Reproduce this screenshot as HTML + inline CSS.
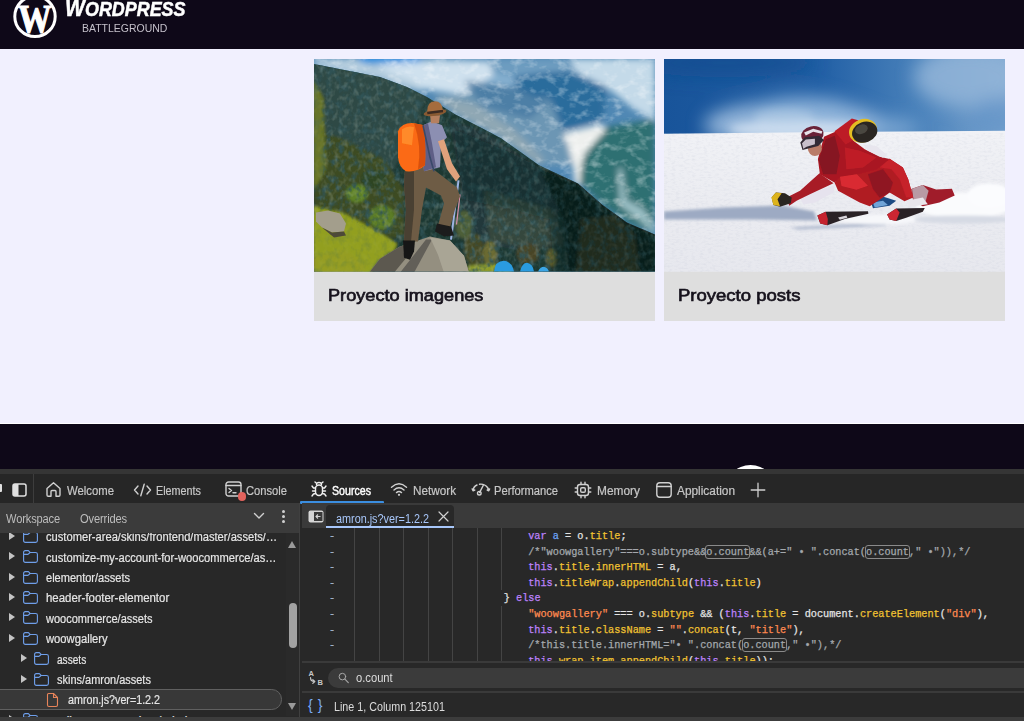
<!DOCTYPE html>
<html lang="es">
<head>
<meta charset="utf-8">
<title>Wordpress Battleground</title>
<style>
*{box-sizing:border-box;margin:0;padding:0}
html,body{width:1024px;height:721px;overflow:hidden;background:#f1f0fe;font-family:"Liberation Sans",sans-serif}
.abs{position:absolute}
.tab,.row .t,#navbar span,.st{transform-origin:0 0}
.st{font:12px "Liberation Sans",sans-serif;color:#dcdcdc;white-space:nowrap}
#page{position:absolute;left:0;top:0;width:1024px;height:470px;background:#f1f0fe;overflow:hidden}
#hdr{position:absolute;left:0;top:0;width:1024px;height:48.7px;background:#0e0818}
#brand{position:absolute;top:-4.6px;font:italic bold 19.5px "Liberation Sans",sans-serif;color:#fff;white-space:nowrap;transform-origin:0 0;-webkit-text-stroke:.5px #fff}
#sub{position:absolute;top:23px;font:10.3px "Liberation Sans",sans-serif;color:#c4c0ca;white-space:nowrap;transform-origin:0 0}
.card{position:absolute;top:59.4px;width:341px;height:261.3px;background:#dedede;overflow:hidden}
.card svg{position:absolute;left:0;top:0}
.cap{position:absolute;top:227.1px;font:16.3px "Liberation Sans",sans-serif;-webkit-text-stroke:.65px #16121c;color:#16121c;white-space:nowrap;transform-origin:0 0}
#ftr{position:absolute;left:0;top:423.2px;width:1024px;height:47px;background:#0e0818;border-top:1px solid #fff;overflow:hidden}
#ftr i{position:absolute;left:724.6px;top:40.8px;width:51.6px;height:51.6px;border-radius:50%;background:#fff}
#dt{position:absolute;left:0;top:469px;width:1024px;height:252px;background:#282828;overflow:hidden;color:#d0d0d0;font:12px "Liberation Sans",sans-serif}

#dt .top{position:absolute;left:0;top:0;width:1024px;height:5.5px;background:#353535}
#dt .tb{position:absolute;left:0;top:5px;width:1024px;height:29px;background:#262626}
.tab{position:absolute;top:9.5px;font:12px "Liberation Sans",sans-serif;color:#c7c7c7;white-space:nowrap;-webkit-text-stroke:.2px #c7c7c7}
.tab.on{color:#fff;-webkit-text-stroke:.4px #fff}
.ico{position:absolute;fill:none;stroke:#d0d0d0;stroke-width:1.4;stroke-linecap:round;stroke-linejoin:round}
#nav{position:absolute;left:0;top:34px;width:299px;height:218px;background:#282828;overflow:hidden}
#navbar{position:absolute;left:0;top:0;width:299px;height:30px;background:#3b3b3b}
#navbar span{position:absolute;top:9px;font:12px "Liberation Sans",sans-serif;color:#bdbdbd;letter-spacing:-.15px}
.row{position:absolute;left:0;height:20px;width:284px;font:12px "Liberation Sans",sans-serif;color:#e6e6e6;white-space:nowrap;-webkit-text-stroke:.2px #e6e6e6}
.row .t{position:absolute;top:3px}
.row .ar{position:absolute;top:4.6px;margin-left:1px;width:0;height:0;border-left:6.5px solid #c4c4c4;border-top:4.5px solid transparent;border-bottom:4.5px solid transparent}
.row svg{position:absolute;top:1.6px}
#split{position:absolute;left:299px;top:34px;width:1.4px;height:218px;background:#404040}
#src{position:absolute;left:302px;top:34px;width:722px;height:217px;background:#282828;overflow:hidden}
#tabs{position:absolute;left:-1.6px;top:0;width:724px;height:25px;background:#3a3a3a}
#tabs>*{margin-left:1.6px}
#ftab{position:absolute;left:24px;top:2px;width:128px;height:23px;background:#282828;border-radius:4px 4px 0 0;border-bottom:2px solid #a8c7fa}
#ftab span{position:absolute;top:6.5px;font:12px "Liberation Sans",sans-serif;color:#a8c7fa;white-space:nowrap;transform-origin:0 0}
#code{position:absolute;left:0;top:25px;width:722px;height:133px;overflow:hidden;font:10.24px "Liberation Mono",monospace;color:#e3e3e3;-webkit-text-stroke:.25px}
.ln.c{color:#a5b4cc}
.ln{position:absolute;left:0;height:15.6px;line-height:15.6px;white-space:pre}
.g{position:absolute;top:0;width:1px;height:140px;background:#444}
.k{color:#bd82fb}.p{color:#f0c232}.s{color:#ff8a50}.c{color:#a4a8ad}.d{color:#6ea6fa}
.bx{outline:1px solid #8a8a8a;border-radius:2px}
#find{position:absolute;left:0;top:158px;width:722px;height:31px;background:#282828;border-top:2px solid #3a3a3a}
#pill{position:absolute;left:26px;top:4.5px;width:720px;height:20px;border-radius:10px;background:#3b3b3b}
#stat{position:absolute;left:0;top:188.3px;width:722px;height:29px;background:#282828;border-top:2px solid #3a3a3a}
#bot{position:absolute;left:0;top:247.5px;width:1024px;height:5px;background:#3c3c3c}

.dot{position:absolute;left:282px;width:3px;height:3px;border-radius:50%;background:#d0d0d0}
.selbg{position:absolute;left:-12px;top:-1px;width:294px;height:20.4px;border:1px solid #606060;border-radius:10.2px;background:#383838}
#sbar{position:absolute;left:285.5px;top:30px;width:13.5px;height:183px;background:#2a2a2a}
#sbar .up{position:absolute;left:2.5px;top:7.5px;width:0;height:0;border-bottom:7px solid #9a9a9a;border-left:4.5px solid transparent;border-right:4.5px solid transparent}
#sbar .dn{position:absolute;left:2.5px;top:170px;width:0;height:0;border-top:7px solid #9a9a9a;border-left:4.5px solid transparent;border-right:4.5px solid transparent}
#sbar .thumb{position:absolute;left:3px;top:69.5px;width:8.2px;height:45px;border-radius:4px;background:#a2a2a2}
</style>
</head>
<body>
<div id="page">
  <div id="hdr">
    <svg class="abs" style="left:13px;top:0" width="44" height="40" viewBox="13 0 44 40">
      <circle cx="35" cy="16.4" r="20.2" fill="none" stroke="#fff" stroke-width="3"/>
      <text x="0" y="0" text-anchor="middle" font-family="Liberation Serif,serif" font-weight="bold" font-size="40" fill="#fff" stroke="#fff" stroke-width="1.1" transform="translate(34.8 32.2) scale(.84 1)">W</text>
    </svg>
    <div id="brand" style="left:64.5px;transform:scaleX(0.9186)"><span style="font-size:23px">W</span>ORDPRESS</div>
    <div id="sub" style="left:81.6px;transform:scaleX(1.0176)">BATTLEGROUND</div>
  </div>
  <div class="card" style="left:314px" id="c1">
    <svg width="341" height="212.7" viewBox="0 0 341 212" preserveAspectRatio="none">
<defs>
<filter id="b1" x="-5%" y="-5%" width="110%" height="110%"><feGaussianBlur stdDeviation="1.6"/></filter>
<filter id="b2" x="-5%" y="-5%" width="110%" height="110%"><feGaussianBlur stdDeviation="0.5"/></filter>
<filter id="b3" x="-5%" y="-5%" width="110%" height="110%"><feGaussianBlur stdDeviation="3"/></filter>
<filter id="b4" x="-10%" y="-10%" width="120%" height="120%"><feGaussianBlur stdDeviation="4"/></filter>
<filter id="tx1" x="0" y="0" width="100%" height="100%"><feTurbulence type="fractalNoise" baseFrequency="0.09 0.13" numOctaves="3" seed="7" result="n"/><feColorMatrix in="n" type="matrix" values="0 0 0 0 1  0 0 0 0 1  0 0 0 0 1  2.6 0 0 0 -1.25"/></filter>
<filter id="tx2" x="0" y="0" width="100%" height="100%"><feTurbulence type="fractalNoise" baseFrequency="0.16 0.12" numOctaves="3" seed="3" result="n"/><feColorMatrix in="n" type="matrix" values="0 0 0 0 0.03  0 0 0 0 0.09  0 0 0 0 0.1  0 3.0 0 0 -1.35"/></filter>
<filter id="tx3" x="0" y="0" width="100%" height="100%"><feTurbulence type="fractalNoise" baseFrequency="0.2 0.16" numOctaves="2" seed="11" result="n"/><feColorMatrix in="n" type="matrix" values="0 0 0 0 0.62  0 0 0 0 0.7  0 0 0 0 0.62  0 0 2.6 0 -1.2"/></filter>
<clipPath id="mtn"><polygon points="0,0 341,0 341,175 313,163 288,145 264,124 225,106 204,91 187,79 170,70 141,55 113,38 93,28 66,18 0,5"/></clipPath>
<clipPath id="fst"><polygon points="0,5 66,18 93,28 113,38 141,55 170,70 187,79 204,91 225,106 264,124 288,145 313,163 341,175 341,212 0,212"/></clipPath>
</defs>
<rect width="341" height="212" fill="#5088b4"/>
<g clip-path="url(#mtn)"><g filter="url(#b3)">
<rect x="0" y="0" width="341" height="30" fill="#86b0d0"/>
<rect x="45" y="-4" width="62" height="8" fill="#1d8fe0"/>
<polygon points="60.0,6.0 120.0,2.0 175.0,4.0 180.0,16.0 150.0,36.0 110.0,30.0" fill="#cfe1ee"/>
<polygon points="200.0,16.0 250.0,10.0 292.0,28.0 290.0,60.0 262.0,68.0 232.0,76.0 206.0,52.0" fill="#2c6c9c"/>
<polygon points="120.0,40.0 170.0,30.0 236.0,40.0 250.0,74.0 254.0,87.0 259.0,106.0 225.0,106.0 204.0,91.0 187.0,79.0 170.0,70.0 141.0,55.0" fill="#6c96b4"/>
<polygon points="291.0,68.0 341.0,60.0 341.0,175.0 313.0,163.0 288.0,145.0 266.0,124.0 266.0,106.0 271.0,94.0" fill="#2f7072"/>
<polygon points="255.0,0.0 341.0,0.0 341.0,62.0 320.0,50.0 292.0,28.0 262.0,12.0" fill="#c4dae9"/>
<polygon points="175.0,0.0 255.0,0.0 262.0,12.0 230.0,14.0 200.0,18.0 180.0,14.0" fill="#6d9cc0"/>
<polygon points="0.0,0.0 40.0,0.0 60.0,8.0 100.0,22.0 110.0,34.0 66.0,18.0 0.0,5.0" fill="#b7cfdf"/>
<polygon points="150.0,22.0 200.0,28.0 235.0,44.0 215.0,60.0 170.0,48.0" fill="#4d7fa6"/>
<polygon points="120.0,36.0 160.0,44.0 200.0,70.0 230.0,100.0 225.0,106.0 187.0,79.0 141.0,55.0" fill="#8fa7b4"/>
<polygon points="249.0,74.0 288.0,65.0 292.0,70.0 271.0,94.0 267.0,108.0 266.0,126.0 261.0,124.0 259.0,106.0 254.0,87.0" fill="#eef0ee"/>
<polygon points="304.0,110.0 308.0,108.0 312.0,140.0 330.0,150.0 341.0,168.0 341.0,175.0 325.0,160.0 306.0,146.0" fill="#b9d6dc" opacity=".8"/>
</g></g>
<rect width="341" height="212" filter="url(#tx1)" clip-path="url(#mtn)" opacity=".38"/>
<g clip-path="url(#fst)">
<g filter="url(#b1)">
<rect x="-5" y="0" width="351" height="217" fill="#1e3732"/>
<polygon points="0.0,5.0 66.0,18.0 93.0,28.0 113.0,38.0 100.0,70.0 80.0,110.0 40.0,120.0 0.0,110.0" fill="#2f4a44"/>
<polygon points="0.0,70.0 30.0,80.0 70.0,100.0 90.0,130.0 90.0,180.0 60.0,175.0 25.0,152.0 0.0,165.0" fill="#3c4c22"/>
<polygon points="0.0,20.0 10.0,40.0 12.0,110.0 0.0,130.0" fill="#5d6a24"/>
<ellipse cx="43" cy="134" rx="11" ry="9" fill="#5f8228"/>
<ellipse cx="68" cy="158" rx="13" ry="12" fill="#5b7d26"/>
<ellipse cx="60" cy="120" rx="14" ry="9" fill="#2f4420"/>
<polygon points="135.0,60.0 170.0,72.0 225.0,108.0 250.0,125.0 240.0,170.0 200.0,190.0 150.0,180.0 146.0,120.0" fill="#22393a"/>
<polygon points="170.0,130.0 240.0,150.0 250.0,185.0 215.0,190.0 175.0,180.0" fill="#36463e"/>
<polygon points="225.0,108.0 264.0,124.0 288.0,145.0 313.0,163.0 341.0,175.0 341.0,212.0 255.0,212.0 250.0,160.0 235.0,130.0" fill="#10221f"/>
<polygon points="267.0,160.0 300.0,156.0 321.0,175.0 325.0,212.0 262.0,212.0" fill="#3a3a22"/>
<ellipse cx="150" cy="165" rx="9" ry="14" fill="#4e5f38"/>
<ellipse cx="160" cy="190" rx="10" ry="16" fill="#454a28"/>
<ellipse cx="176" cy="194" rx="7" ry="13" fill="#6a6a30"/>
<ellipse cx="214" cy="194" rx="11" ry="10" fill="#4a4526"/>
<ellipse cx="238" cy="198" rx="5" ry="9" fill="#6a6a32"/>
<polygon points="0.0,147.0 30.0,154.0 60.0,170.0 83.0,184.0 80.0,191.0 66.0,199.0 55.0,214.0 0.0,214.0" fill="#8e9c1e"/>
<polygon points="0.0,196.0 30.0,190.0 52.0,205.0 50.0,214.0 0.0,214.0" fill="#9a8f2c"/>
<polygon points="154.0,206.0 180.0,204.0 200.0,212.0 154.0,214.0" fill="#8e9c2a"/>
</g>
<rect width="341" height="212" filter="url(#tx2)" opacity=".85"/>
<rect width="341" height="212" filter="url(#tx3)" opacity=".22"/>
<g filter="url(#b3)">
<polygon points="232.0,112.0 264.0,126.0 288.0,147.0 313.0,165.0 341.0,177.0 341.0,214.0 240.0,214.0 236.0,160.0" fill="#0b1a18" opacity=".45"/>
<polygon points="140.0,70.0 200.0,95.0 232.0,112.0 236.0,160.0 200.0,150.0 150.0,140.0" fill="#0f2422" opacity=".3"/>
</g>
<g filter="url(#b1)">
<polygon points="0.0,149.0 30.0,156.0 60.0,172.0 82.0,185.0 78.0,191.0 66.0,199.0 55.0,214.0 0.0,214.0" fill="#93a01e" opacity=".8"/>
<polygon points="0.0,22.0 8.0,40.0 10.0,110.0 0.0,130.0" fill="#6d7a26" opacity=".7"/>
</g>
<g filter="url(#b2)">
<polygon points="2.0,153.0 14.0,151.0 26.0,154.0 32.0,164.0 30.0,172.0 18.0,173.0 8.0,168.0 2.0,162.0" fill="#a39e8c"/>
<polygon points="8.0,168.0 18.0,173.0 30.0,172.0 32.0,176.0 20.0,178.0" fill="#4d4a38"/>
<path d="M180 212 Q181 201 190 201 Q198 202 200 212 Z" fill="#2a9be0"/>
<path d="M206 212 Q208 203 213 203 Q219 204 220 212 Z" fill="#2a9be0"/>
<path d="M224 212 Q226 207 230 207 Q234 208 235 212 Z" fill="#3aa5e6"/>
<polygon points="55.0,213.0 66.0,199.0 86.0,187.0 116.0,177.0 136.0,181.0 150.0,196.0 155.0,213.0" fill="#948f80"/>
<polygon points="55.0,213.0 66.0,199.0 86.0,187.0 100.0,183.0 94.0,196.0 80.0,213.0" fill="#5c594f"/>
<polygon points="86.0,213.0 112.0,180.0 118.0,180.0 100.0,213.0" fill="#625f58"/>
<polygon points="116.0,178.0 136.0,181.0 150.0,196.0 155.0,213.0 130.0,213.0 124.0,195.0" fill="#a9a595"/>
</g>
</g>
<g filter="url(#b2)">
<path d="M144.5 121 L137 180" stroke="#9db4e4" stroke-width="2" fill="none"/>
<path d="M146 135 L142.5 165" stroke="#d890a8" stroke-width="1.2" fill="none"/>
<polygon points="91.0,109.0 113.0,106.0 122.0,112.0 143.0,128.0 146.0,137.0 141.0,150.0 136.0,168.0 124.0,166.0 130.0,144.0 127.0,136.0 112.0,128.0 108.0,150.0 104.0,182.0 90.0,182.0 92.0,150.0 90.0,125.0" fill="#6e5c45"/>
<polygon points="91.0,112.0 100.0,112.0 100.0,150.0 97.0,182.0 90.0,182.0 92.0,150.0 90.0,125.0" fill="#4a3f31"/>
<polygon points="89.0,181.0 101.0,181.0 100.0,192.0 96.0,200.0 90.0,198.0" fill="#191816"/>
<polygon points="123.0,164.0 137.0,167.0 140.0,176.0 130.0,177.0 121.0,172.0" fill="#1d1c1a"/>
<polygon points="109.0,66.0 118.0,62.0 128.0,66.0 133.0,78.0 127.0,84.0 126.0,108.0 110.0,112.0 108.0,90.0" fill="#8c8fb2"/>
<polygon points="109.0,66.0 114.0,64.0 118.0,84.0 122.0,108.0 110.0,112.0 108.0,90.0" fill="#5e5f86"/>
<polygon points="124.0,82.0 130.0,80.0 138.0,104.0 146.0,117.0 142.0,122.0 133.0,110.0" fill="#e0a27c"/>
<polygon points="116.0,56.0 126.0,56.0 125.0,64.0 117.0,64.0" fill="#b5805e"/>
<ellipse cx="121" cy="53.5" rx="11.5" ry="3.2" fill="#8a5a32" transform="rotate(-8 121 53.5)"/>
<path d="M113 53 Q113 42 121 42 Q128 42 129 51 Z" fill="#a56c3e"/>
<path d="M113 52.5 L129 50.5 L129 53 L113.500 55 Z" fill="#3a2a20"/>
<path d="M84 72 Q88 63 100 64 L110 66 Q112 90 111 106 Q104 113 92 112 Q85 108 84 98 Z" fill="#fb6a12"/>
<path d="M100 64 L110 66 Q112 90 111 106 L104 110 Q108 86 100 64 Z" fill="#d9500c"/>
<path d="M88 70 Q94 66 100 68 L98 86 L88 84 Z" fill="#ff8a2a"/>
<path d="M109 66 L116 98 L120 112" stroke="#3a4a6a" stroke-width="1.6" fill="none"/>
</g>
</svg>
    <div class="cap" style="left:14.1px;transform:scaleX(1.1150)">Proyecto imagenes</div>
  </div>
  <div class="card" style="left:664px" id="c2">
    <svg width="341" height="212.7" viewBox="0 0 341 212" preserveAspectRatio="none">
<defs>
<linearGradient id="sky" x1="0" y1="0" x2="1" y2="0"><stop offset="0" stop-color="#18549a"/><stop offset=".45" stop-color="#215fa5"/><stop offset=".75" stop-color="#4a82bb"/><stop offset="1" stop-color="#7aa4cf"/></linearGradient>
<linearGradient id="snow" x1="0" y1="0" x2="0" y2="1"><stop offset="0" stop-color="#f1f2f6"/><stop offset=".5" stop-color="#ebecf1"/><stop offset="1" stop-color="#e7e8ee"/></linearGradient>
<filter id="sf1" x="-20%" y="-20%" width="140%" height="140%"><feGaussianBlur stdDeviation="9"/></filter>
<filter id="sf2" x="-20%" y="-20%" width="140%" height="140%"><feGaussianBlur stdDeviation="4"/></filter>
<filter id="sf3" x="-10%" y="-10%" width="120%" height="120%"><feGaussianBlur stdDeviation="1.5"/></filter>
<filter id="sf4" x="-5%" y="-5%" width="110%" height="110%"><feGaussianBlur stdDeviation="0.7"/></filter>
<filter id="sn" x="0" y="0" width="100%" height="100%"><feTurbulence type="fractalNoise" baseFrequency="0.25 0.5" numOctaves="2" seed="5"/><feColorMatrix type="matrix" values="0 0 0 0 0.55  0 0 0 0 0.58  0 0 0 0 0.68  0 0 1.6 0 -0.72"/></filter>
</defs>
<rect width="341" height="80" fill="url(#sky)"/>
<g filter="url(#sf1)">
<ellipse cx="305" cy="18" rx="55" ry="30" fill="#93b5d8" opacity=".85"/>
<ellipse cx="335" cy="58" rx="30" ry="20" fill="#5f93c6" opacity=".6"/>
<ellipse cx="130" cy="66" rx="90" ry="24" fill="#a9c6e4" opacity=".85"/>
<ellipse cx="140" cy="52" rx="50" ry="16" fill="#8fb4da" opacity=".6"/>
<ellipse cx="215" cy="70" rx="40" ry="12" fill="#8fb5db" opacity=".7"/>
<ellipse cx="60" cy="4" rx="90" ry="14" fill="#154c8f" opacity=".7"/>
</g>
<g filter="url(#sf2)"><ellipse cx="135" cy="70" rx="70" ry="9" fill="#d6e4f2" opacity=".8"/><ellipse cx="120" cy="58" rx="30" ry="8" fill="#bdd3ea" opacity=".5"/></g>
<path d="M0 74.5 Q170 72.5 341 71.5 L341 212 L0 212 Z" fill="url(#snow)"/>
<rect y="74" width="341" height="138" filter="url(#sn)" opacity=".35"/>
<g filter="url(#sf3)">
<polygon points="0.0,152.0 60.0,148.0 118.0,146.0 150.0,152.0 153.0,161.0 90.0,160.0 0.0,160.0" fill="#9daac3"/>
<polygon points="125.0,168.0 222.0,163.0 222.0,166.0 135.0,170.0" fill="#aab5cb"/>
<ellipse cx="300" cy="146" rx="48" ry="13" fill="#fafbfd"/>
<ellipse cx="325" cy="136" rx="22" ry="12" fill="#fbfcfe"/>
<ellipse cx="215" cy="160" rx="40" ry="5" fill="#f6f7fa"/>
<ellipse cx="300" cy="160" rx="50" ry="4" fill="#d6dae4"/>
</g>
<g filter="url(#sf4)">
<polygon points="153.4,155.9 161.7,152.3 204.0,151.8 204.4,154.3 180.8,159.6 163.4,165.6 156.2,163.9" fill="#2b2228"/>
<polygon points="153.4,155.9 161.7,152.3 163.8,159.6 163.4,165.6 156.2,163.9" fill="#c4222e"/>
<polygon points="223.1,155.0 232.2,149.0 260.8,148.6 258.8,152.3 242.2,158.3 232.2,161.6 225.6,159.9" fill="#2b2228"/>
<polygon points="223.1,155.0 232.2,149.0 235.6,153.0 232.2,161.6 225.6,159.9" fill="#cc2632"/>
<polygon points="174.1,157.9 182.4,155.9 183.3,158.3 175.8,160.3" fill="#d8d4da"/>
<polygon points="247.2,129.7 258.8,125.7 272.1,130.1 287.9,129.4 290.7,136.0 275.4,143.0 258.8,146.7 249.2,141.7" fill="#a01f2c"/>
<polygon points="248.0,129.4 258.8,125.7 264.6,131.4 261.3,143.0 249.7,141.7" fill="#b89aa4"/>
<polygon points="242.2,141.3 258.8,138.0 263.8,144.7 245.5,147.2" fill="#e9e6ec"/>
<polygon points="205.7,139.7 215.6,136.0 232.2,141.3 225.6,146.3 209.0,148.8" fill="#1f4b84"/>
<polygon points="209.0,143.0 219.0,141.3 223.9,145.5 210.7,148.0" fill="#6fa4d8"/>
<polygon points="225.6,99.5 238.9,108.1 244.2,119.8 249.2,138.0 240.5,141.7 225.6,133.0 219.0,138.0 205.7,146.7 195.7,143.0 174.1,131.4 170.5,123.1 175.8,114.8 202.4,109.8" fill="#b01a24"/>
<polygon points="175.8,116.8 192.4,114.4 204.0,126.4 192.4,130.4 177.5,126.7" fill="#d92c32"/>
<polygon points="225.6,99.5 238.9,108.1 244.2,119.8 249.2,138.0 242.2,138.0 235.6,119.8 227.3,109.8 215.6,108.1" fill="#c6202a"/>
<polygon points="204.0,114.8 219.0,109.8 228.9,123.1 225.6,133.0 215.6,138.0 209.0,129.7" fill="#8f1620"/>
<polygon points="160.0,77.4 174.1,71.3 189.1,81.2 200.7,89.9 215.6,97.5 225.6,99.8 212.3,109.8 192.4,114.8 175.8,117.3 170.5,123.1 155.9,114.8 153.9,99.8" fill="#a91822"/>
<polygon points="161.7,79.9 170.8,76.6 175.8,96.5 172.5,114.8 159.2,114.8 154.6,100.7" fill="#861420"/>
<polygon points="180.8,88.2 195.7,91.5 212.3,98.2 199.0,108.1 182.4,109.8" fill="#bf1f28"/>
<polygon points="170.5,72.0 187.8,59.3 194.1,61.0 191.1,79.9 181.6,85.2" fill="#bd1c26"/>
<ellipse cx="199.0" cy="71.6" rx="14.3" ry="11.6" fill="#e3bd22" transform="rotate(-20 199.0 71.6)"/>
<ellipse cx="200.7" cy="72.9" rx="12.9" ry="10.3" fill="#2a2622" transform="rotate(-20 200.7 72.9)"/>
<ellipse cx="197.4" cy="70.0" rx="6.6" ry="4.6" fill="#4a4640" transform="rotate(-20 197.4 70.0)"/>
<polygon points="199.0,84.9 212.3,86.6 223.1,95.7 219.0,98.5 204.0,91.5" fill="#e8e6ee"/>
<polygon points="136.0,138.0 170.8,125.6 169.5,133.0 150.9,143.0 139.3,145.0" fill="#e6e3ee"/>
<polygon points="155.5,114.0 169.5,123.9 145.9,134.7 132.6,141.3 125.2,146.3 122.7,138.0 136.0,131.4" fill="#a81a26"/>
<polygon points="107.7,138.0 111.9,133.0 121.0,133.9 127.7,138.0 126.8,143.8 116.0,147.2 109.4,145.5" fill="#2c2520"/>
<polygon points="107.4,138.0 111.9,133.0 117.7,133.9 113.5,139.7 116.0,146.7 109.4,145.5" fill="#dcb31c"/>
<ellipse cx="150.9" cy="89.1" rx="7.0" ry="7.6" fill="#b97c68" transform="rotate(0 150.9 89.1)"/>
<ellipse cx="148.4" cy="75.3" rx="11.3" ry="8.3" fill="#6a2438" transform="rotate(-12 148.4 75.3)"/>
<polygon points="140.1,73.3 149.2,69.6 158.4,72.0 157.5,74.6 149.2,72.6 141.8,76.3" fill="#e6e2ea"/>
<polygon points="136.3,83.2 140.9,77.9 155.1,76.6 160.0,80.8 154.2,86.6 144.3,89.1 138.5,90.7" fill="#332a34"/>
<polygon points="138.0,84.1 141.8,80.3 150.9,79.6 150.9,84.9 142.6,87.4 139.3,89.5" fill="#c9c0cc"/>
</g>
</svg>
    <div class="cap" style="left:14.1px;transform:scaleX(1.1365)">Proyecto posts</div>
  </div>
  <div id="ftr"><i></i></div>
</div>
<div id="dt">
  <div class="top"></div>
  <div class="tb" id="tb">
    <i class="abs" style="left:0;top:10px;width:2px;height:8px;background:#e0e0e0;border-radius:0 1px 1px 0"></i>
    <svg class="abs" style="left:12px;top:9px" width="15" height="14" viewBox="0 0 15 14"><rect x="1" y="1" width="13" height="12" rx="2" fill="none" stroke="#e0e0e0" stroke-width="1.5"/><rect x="1" y="1" width="5.5" height="12" fill="#e0e0e0"/></svg>
    <i class="abs" style="left:33px;top:0;width:1px;height:29px;background:#3d3d3d"></i>
    <svg class="ico" style="left:45px;top:7px" width="17" height="17" viewBox="0 0 17 17"><path d="M2 7.5 L8.5 1.8 L15 7.5 L15 14 Q15 15.2 13.8 15.2 L11 15.2 L11 10.5 Q11 9.5 10 9.5 L7 9.5 Q6 9.5 6 10.5 L6 15.2 L3.2 15.2 Q2 15.2 2 14 Z"/></svg>
    <span class="tab" style="left:67px;transform:scaleX(0.9438)">Welcome</span>
    <svg class="ico" style="left:133px;top:9px" width="19" height="14" viewBox="0 0 19 14"><path d="M5 3 L1.5 7 L5 11 M14 3 L17.5 7 L14 11 M11.2 1.2 L7.8 12.8"/></svg>
    <span class="tab" style="left:156px;transform:scaleX(0.8994)">Elements</span>
    <svg class="ico" style="left:225px;top:7px" width="17" height="16" viewBox="0 0 17 16"><rect x="1" y="1" width="15" height="14" rx="2.5"/><path d="M1 4.5 L16 4.5 M4 7.5 L6.5 9.5 L4 11.5 M8 11.8 L11 11.8"/></svg>
    <i class="abs" style="left:237.5px;top:18px;width:8.5px;height:8.5px;border-radius:50%;background:#e2635d"></i>
    <span class="tab" style="left:246px;transform:scaleX(0.9312)">Console</span>
    <svg class="ico" style="left:310px;top:6px;stroke:#f0f0f0" width="18" height="19" viewBox="0 0 18 19"><rect x="5.5" y="5" width="7" height="10.5" rx="3.5"/><path d="M6.5 4.5 Q6.5 2.5 9 2.5 Q11.5 2.5 11.5 4.5 M5 2 L6.8 3.6 M13 2 L11.2 3.6 M5.5 8 L3.5 8 L2 6 M12.5 8 L14.5 8 L16 6 M5.5 11 L2.5 11 M12.5 11 L15.5 11 M5.8 13.5 L3.5 14 L2 16 M12.2 13.5 L14.5 14 L16 16"/></svg>
    <span class="tab on" style="left:332px;transform:scaleX(0.8857)">Sources</span>
    <i class="abs" style="left:300px;top:27px;width:84px;height:2.500px;background:#3b8ee0;border-radius:1px"></i>
    <svg class="ico" style="left:390px;top:8px" width="18" height="15" viewBox="0 0 18 15"><path d="M1.5 5.2 Q9 -1.5 16.5 5.2 M4 8 Q9 3.5 14 8 M6.5 10.6 Q9 8.4 11.5 10.6"/><circle cx="9" cy="12.8" r="1.1" fill="#d0d0d0" stroke="none"/></svg>
    <span class="tab" style="left:413px;transform:scaleX(0.9769)">Network</span>
    <svg class="ico" style="left:471px;top:8px" width="20" height="15" viewBox="0 0 20 15"><path d="M2 8.5 Q2.5 4.5 6 3 M8.5 2.2 Q13.5 1.5 16.5 5.5 Q17.5 7 17.8 8.5 M1.2 7 L2 8.8 L3.8 8 M16.2 8 L17.8 8.8 L18.6 7"/><path d="M12.2 3.5 L8.6 10.5" stroke-width="1.5"/><circle cx="8.3" cy="11.2" r="1.8"/></svg>
    <span class="tab" style="left:494px;transform:scaleX(0.9315)">Performance</span>
    <svg class="ico" style="left:574px;top:7px" width="18" height="18" viewBox="0 0 18 18"><rect x="3.5" y="3.5" width="11" height="11" rx="2.5"/><rect x="6.7" y="6.7" width="4.6" height="4.6" rx="1.2"/><path d="M7 1.2 L7 3.5 M11 1.2 L11 3.5 M7 14.5 L7 16.8 M11 14.5 L11 16.8 M1.2 7 L3.5 7 M1.2 11 L3.5 11 M14.5 7 L16.8 7 M14.5 11 L16.8 11"/></svg>
    <span class="tab" style="left:597px;transform:scaleX(0.9921)">Memory</span>
    <svg class="ico" style="left:655px;top:7px" width="18" height="18" viewBox="0 0 18 18"><rect x="1.8" y="1.8" width="14.4" height="14.4" rx="3"/><path d="M1.8 5.5 L16.2 5.5"/></svg>
    <span class="tab" style="left:677px;transform:scaleX(0.9878)">Application</span>
    <svg class="ico" style="left:750px;top:8px" width="16" height="16" viewBox="0 0 16 16"><path d="M8 1.2 L8 14.8 M1.2 8 L14.8 8" stroke-width="1.3"/></svg>
  </div>
  <div id="nav">
    <div class="row" style="top:24.2px"><i class="ar" style="left:8px"></i><svg style="left:22.0px" width="17" height="15" viewBox="0 0 16 14"><path d="M1.5 3.2 Q1.5 1.5 3.2 1.5 L6 1.5 L7.6 3.2 L12.8 3.2 Q14.5 3.2 14.5 4.9 L14.5 10.8 Q14.5 12.5 12.8 12.5 L3.2 12.5 Q1.5 12.5 1.5 10.8 Z M1.5 5 L5.6 5 L7.6 3.2" fill="none" stroke="#6f9fea" stroke-width="1.05" stroke-linejoin="round"/></svg><span class="t" style="left:45.5px;transform:scaleX(0.9290)">customer-area/skins/frontend/master/assets/…</span></div>
    <div class="row" style="top:44.6px"><i class="ar" style="left:8px"></i><svg style="left:22.0px" width="17" height="15" viewBox="0 0 16 14"><path d="M1.5 3.2 Q1.5 1.5 3.2 1.5 L6 1.5 L7.6 3.2 L12.8 3.2 Q14.5 3.2 14.5 4.9 L14.5 10.8 Q14.5 12.5 12.8 12.5 L3.2 12.5 Q1.5 12.5 1.5 10.8 Z M1.5 5 L5.6 5 L7.6 3.2" fill="none" stroke="#6f9fea" stroke-width="1.05" stroke-linejoin="round"/></svg><span class="t" style="left:45.5px;transform:scaleX(0.9290)">customize-my-account-for-woocommerce/as…</span></div>
    <div class="row" style="top:65.0px"><i class="ar" style="left:8px"></i><svg style="left:22.0px" width="17" height="15" viewBox="0 0 16 14"><path d="M1.5 3.2 Q1.5 1.5 3.2 1.5 L6 1.5 L7.6 3.2 L12.8 3.2 Q14.5 3.2 14.5 4.9 L14.5 10.8 Q14.5 12.5 12.8 12.5 L3.2 12.5 Q1.5 12.5 1.5 10.8 Z M1.5 5 L5.6 5 L7.6 3.2" fill="none" stroke="#6f9fea" stroke-width="1.05" stroke-linejoin="round"/></svg><span class="t" style="left:45.5px;transform:scaleX(0.9191)">elementor/assets</span></div>
    <div class="row" style="top:85.4px"><i class="ar" style="left:8px"></i><svg style="left:22.0px" width="17" height="15" viewBox="0 0 16 14"><path d="M1.5 3.2 Q1.5 1.5 3.2 1.5 L6 1.5 L7.6 3.2 L12.8 3.2 Q14.5 3.2 14.5 4.9 L14.5 10.8 Q14.5 12.5 12.8 12.5 L3.2 12.5 Q1.5 12.5 1.5 10.8 Z M1.5 5 L5.6 5 L7.6 3.2" fill="none" stroke="#6f9fea" stroke-width="1.05" stroke-linejoin="round"/></svg><span class="t" style="left:45.5px;transform:scaleX(0.9520)">header-footer-elementor</span></div>
    <div class="row" style="top:105.8px"><i class="ar" style="left:8px"></i><svg style="left:22.0px" width="17" height="15" viewBox="0 0 16 14"><path d="M1.5 3.2 Q1.5 1.5 3.2 1.5 L6 1.5 L7.6 3.2 L12.8 3.2 Q14.5 3.2 14.5 4.9 L14.5 10.8 Q14.5 12.5 12.8 12.5 L3.2 12.5 Q1.5 12.5 1.5 10.8 Z M1.5 5 L5.6 5 L7.6 3.2" fill="none" stroke="#6f9fea" stroke-width="1.05" stroke-linejoin="round"/></svg><span class="t" style="left:45.5px;transform:scaleX(0.9177)">woocommerce/assets</span></div>
    <div class="row" style="top:126.2px"><i class="ar" style="left:8px"></i><svg style="left:22.0px" width="17" height="15" viewBox="0 0 16 14"><path d="M1.5 3.2 Q1.5 1.5 3.2 1.5 L6 1.5 L7.6 3.2 L12.8 3.2 Q14.5 3.2 14.5 4.9 L14.5 10.8 Q14.5 12.5 12.8 12.5 L3.2 12.5 Q1.5 12.5 1.5 10.8 Z M1.5 5 L5.6 5 L7.6 3.2" fill="none" stroke="#6f9fea" stroke-width="1.05" stroke-linejoin="round"/></svg><span class="t" style="left:45.5px;transform:scaleX(0.9344)">woowgallery</span></div>
    <div class="row" style="top:146.6px"><i class="ar" style="left:20px"></i><svg style="left:32.6px" width="17" height="15" viewBox="0 0 16 14"><path d="M1.5 3.2 Q1.5 1.5 3.2 1.5 L6 1.5 L7.6 3.2 L12.8 3.2 Q14.5 3.2 14.5 4.9 L14.5 10.8 Q14.5 12.5 12.8 12.5 L3.2 12.5 Q1.5 12.5 1.5 10.8 Z M1.5 5 L5.6 5 L7.6 3.2" fill="none" stroke="#6f9fea" stroke-width="1.05" stroke-linejoin="round"/></svg><span class="t" style="left:57.1px;transform:scaleX(0.8418)">assets</span></div>
    <div class="row" style="top:167.0px"><i class="ar" style="left:20px"></i><svg style="left:32.6px" width="17" height="15" viewBox="0 0 16 14"><path d="M1.5 3.2 Q1.5 1.5 3.2 1.5 L6 1.5 L7.6 3.2 L12.8 3.2 Q14.5 3.2 14.5 4.9 L14.5 10.8 Q14.5 12.5 12.8 12.5 L3.2 12.5 Q1.5 12.5 1.5 10.8 Z M1.5 5 L5.6 5 L7.6 3.2" fill="none" stroke="#6f9fea" stroke-width="1.05" stroke-linejoin="round"/></svg><span class="t" style="left:57.1px;transform:scaleX(0.9143)">skins/amron/assets</span></div>
    <div class="row sel" style="top:187.4px"><b class="selbg"></b><svg style="left:46px;top:1.2px" width="13" height="16" viewBox="0 0 13 16"><path d="M2.5 1.5 L7.5 1.5 L11.5 5.5 L11.5 13 Q11.5 14.5 10 14.5 L3 14.5 Q1.5 14.5 1.5 13 L1.5 2.5 Q1.5 1.5 2.5 1.5 Z M7.5 1.5 L7.5 5.5 L11.5 5.5" fill="none" stroke="#e8845a" stroke-width="1.1" stroke-linejoin="round"/></svg><span class="t" style="left:68px;transform:scaleX(0.8927)">amron.js?ver=1.2.2</span></div>
    <div class="row" style="top:207.8px"><i class="ar" style="left:8px"></i><svg style="left:22.0px" width="17" height="15" viewBox="0 0 16 14"><path d="M1.5 3.2 Q1.5 1.5 3.2 1.5 L6 1.5 L7.6 3.2 L12.8 3.2 Q14.5 3.2 14.5 4.9 L14.5 10.8 Q14.5 12.5 12.8 12.5 L3.2 12.5 Q1.5 12.5 1.5 10.8 Z M1.5 5 L5.6 5 L7.6 3.2" fill="none" stroke="#6f9fea" stroke-width="1.05" stroke-linejoin="round"/></svg><span class="t" style="left:46px">media-sync-premium/admin</span></div>
    <div id="navbar"><span style="left:5.5px;transform:scaleX(0.9246)">Workspace</span><span style="left:80px;transform:scaleX(0.9286)">Overrides</span>
      <svg class="ico" style="left:253px;top:9px" width="12" height="8" viewBox="0 0 12 8"><path d="M1.5 1.5 L6 6 L10.5 1.5"/></svg>
      <i class="dot" style="top:7px"></i><i class="dot" style="top:12px"></i><i class="dot" style="top:17px"></i>
    </div>
    <div id="sbar"><i class="up"></i><i class="thumb"></i><i class="dn"></i></div>
  </div>
  <div id="split"></div>
  <div id="src">
    <div id="tabs">
      <svg class="abs" style="left:5.5px;top:6.5px" width="16" height="13" viewBox="0 0 16 13"><rect x="0.5" y="0.5" width="15" height="12" rx="2" fill="#d6d6d6"/><rect x="6" y="2" width="8.5" height="9" fill="#3a3a3a"/><path d="M12.5 6.5 L8 6.5 M10 4.5 L8 6.5 L10 8.5" stroke="#d6d6d6" stroke-width="1.1" fill="none"/></svg>
      <div id="ftab"><span style="left:10px;transform:scaleX(0.9024)">amron.js?ver=1.2.2</span>
        <svg class="ico" style="left:112px;top:6px" width="11" height="11" viewBox="0 0 11 11"><path d="M1 1 L10 10 M10 1 L1 10" stroke-width="1.2"/></svg>
      </div>
    </div>
    <div id="code">
      <i class="g" style="left:199.3px"></i>
      <i class="g" style="left:174.8px"></i>
      <i class="g" style="left:150.3px"></i>
      <i class="g" style="left:125.8px"></i>
      <i class="g" style="left:101.3px"></i>
      <i class="g" style="left:76.8px"></i>
      <i class="g" style="left:52.3px"></i>
      <i class="g" style="left:199.3px;top:62.3px;height:15.6px;background:#282828"></i>
      <div class="ln" style="top:0.9px;left:226.2px"><span class="k">var</span> <span class="d">a</span> = o.<span class="p">title</span>;</div>
      <div class="ln c" style="top:0.9px;left:27.0px">-</div>
      <div class="ln" style="top:16.5px;left:226.2px"><span class="c">/*"woowgallery"===o.subtype&amp;&amp;<span class="bx">o.count</span>&amp;&amp;(a+=" • ".concat(<span class="bx">o.count</span>," •")),*/</span></div>
      <div class="ln c" style="top:16.5px;left:27.0px">-</div>
      <div class="ln" style="top:32.1px;left:226.2px"><span class="k">this</span>.<span class="p">title</span>.<span class="p">innerHTML</span> = a,</div>
      <div class="ln c" style="top:32.1px;left:27.0px">-</div>
      <div class="ln" style="top:47.7px;left:226.2px"><span class="k">this</span>.<span class="p">titleWrap</span>.<span class="p">appendChild</span>(<span class="k">this</span>.<span class="p">title</span>)</div>
      <div class="ln c" style="top:47.7px;left:27.0px">-</div>
      <div class="ln" style="top:63.3px;left:201.7px">} <span class="k">else</span></div>
      <div class="ln c" style="top:63.3px;left:27.0px">-</div>
      <div class="ln" style="top:78.9px;left:226.2px"><span class="s">"woowgallery"</span> === o.<span class="p">subtype</span> &amp;&amp; (<span class="k">this</span>.<span class="p">title</span> = document.<span class="p">createElement</span>(<span class="s">"div"</span>),</div>
      <div class="ln c" style="top:78.9px;left:27.0px">-</div>
      <div class="ln" style="top:94.5px;left:226.2px"><span class="k">this</span>.<span class="p">title</span>.<span class="p">className</span> = <span class="s">""</span>.<span class="p">concat</span>(t, <span class="s">"title"</span>),</div>
      <div class="ln c" style="top:94.5px;left:27.0px">-</div>
      <div class="ln" style="top:110.1px;left:226.2px"><span class="c">/*this.title.innerHTML="• ".concat(<span class="bx">o.count</span>," •"),*/</span></div>
      <div class="ln c" style="top:110.1px;left:27.0px">-</div>
      <div class="ln" style="top:125.7px;left:226.2px"><span class="k">this</span>.<span class="p">wrap_item</span>.<span class="p">appendChild</span>(<span class="k">this</span>.<span class="p">title</span>));</div>
      <div class="ln c" style="top:125.7px;left:27.0px">-</div>
    </div>
    <div id="find">
      <svg class="abs" style="left:6px;top:6px" width="16" height="17" viewBox="0 0 16 17"><text x="0.5" y="6.5" font-family="Liberation Sans,sans-serif" font-size="7.5" font-weight="bold" fill="#c7c7c7">A</text><text x="9.5" y="15.5" font-family="Liberation Sans,sans-serif" font-size="7.5" font-weight="bold" fill="#c7c7c7">B</text><path d="M2.5 8.5 Q2.5 12.5 6.5 12.5 M4.8 10.6 L6.8 12.5 L4.8 14.4" fill="none" stroke="#c7c7c7" stroke-width="1.2" stroke-linecap="round" stroke-linejoin="round"/></svg>
      <div id="pill">
        <svg class="ico" style="left:10px;top:4px;stroke:#a8a8a8" width="12" height="12" viewBox="0 0 12 12"><circle cx="4.4" cy="4.6" r="3.3" stroke-width="1"/><path d="M6.9 7.1 L10.3 10.6" stroke-width="1.1"/></svg>
        <span class="abs st" style="top:3px;left:28.3px;transform:scaleX(0.9321)">o.count</span>
      </div>
    </div>
    <div id="stat"><span class="abs" style="left:6px;top:3.7px;font:14px 'Liberation Sans',sans-serif;color:#7cacf8;letter-spacing:5px">{}</span><span class="abs st" style="top:6.7px;left:31.8px;transform:scaleX(0.8937)">Line 1, Column 125101</span></div>
  </div>
  <div id="bot"></div>
</div>
</body>
</html>
